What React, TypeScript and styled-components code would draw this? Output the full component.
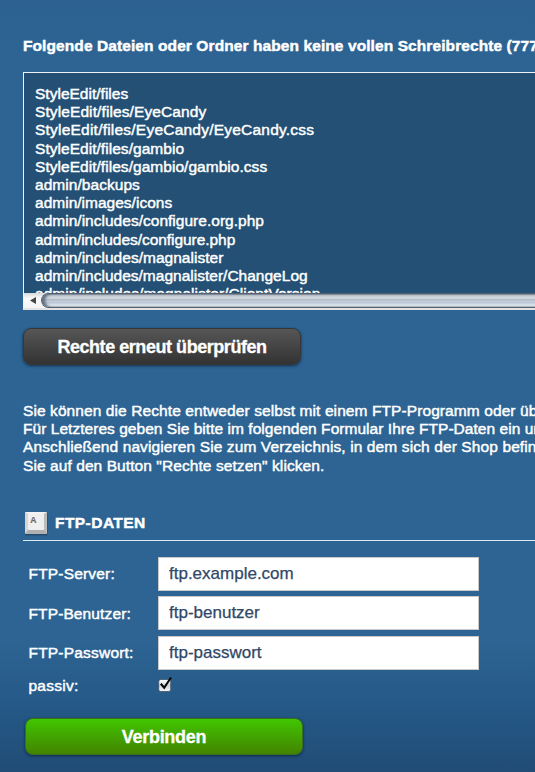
import React from "react";
import styled, { createGlobalStyle } from "styled-components";

const GlobalStyle = createGlobalStyle`
  * { box-sizing: border-box; }
  html, body { margin: 0; padding: 0; overflow: hidden; }
  body { font-family: "Liberation Sans", Arial, sans-serif; }
`;

const Page = styled.main`
  width: 100%;
  height: 772px;
  padding: 37px 0 0 23px;
  overflow: hidden;
  color: #fff;
  font-size: 15.5px;
  line-height: 18.2px;
  white-space: nowrap;
  -webkit-text-stroke: 0.45px currentColor;
  background: linear-gradient(#2c6191 0, #2d6493 60px, #2d6493 640px, #265a88 700px, #204c76 772px);
`;

const Title = styled.h1`
  margin: 0 0 17px;
  font-size: 15.5px;
  line-height: 18px;
  font-weight: 700;
  letter-spacing: 0.09px;
`;

const FilePanel = styled.section`
  width: 700px;
  height: 238px;
  margin-bottom: 18px;
  border: 1px solid #eef3f7;
  border-right: 0;
  border-bottom: 2px solid #e3e3e3;
  background: #235074;
  display: flex;
  flex-direction: column;
`;

const FileList = styled.ul`
  flex: 1;
  min-height: 0;
  margin: 0;
  padding: 12px 0 0 11px;
  list-style: none;
  overflow: hidden;
`;

const TextLine = styled.div<{ $spacing: number }>`
  letter-spacing: ${(p) => p.$spacing}px;
`;

const Scrollbar = styled.div`
  display: flex;
  height: 15px;
  flex: none;
  background: linear-gradient(#d9d9d9, #fafafa 35%, #f4f4f4);
`;

const ScrollArrow = styled.svg`
  flex: none;
  width: 17px;
  height: 15px;
`;

const ScrollThumb = styled.div`
  flex: 1;
  border: 1px solid #55616e;
  border-right: 0;
  border-radius: 8px 0 0 8px;
  box-shadow: inset 3px 0 3px #5d6d7e;
  background: linear-gradient(#6f8192 0, #c3cad2 10%, #d3d8de 25%, #ccd2da 35%, #a9b5c3 45%, #c8d0da 56%, #b6c5d6 66%, #f3faff 92%, #c6cbd0 100%);
`;

const Button = styled.button<{ $tone: "dark" | "green" }>`
  display: block;
  width: 278px;
  height: 37px;
  padding: 1px 0 0;
  border-radius: 8px;
  border: 1px solid ${(p) => (p.$tone === "dark" ? "#353637" : "#39701d")};
  background: ${(p) =>
    p.$tone === "dark"
      ? "linear-gradient(#565656, #333)"
      : "linear-gradient(#41c600, #438300)"};
  box-shadow: 0 1px 3px rgba(0, 20, 45, 0.65);
  color: #fff;
  font: 700 18px/35px "Liberation Sans", Arial, sans-serif;
  letter-spacing: ${(p) => (p.$tone === "dark" ? "-0.45px" : "-0.3px")};
  -webkit-text-stroke: 0.3px currentColor;
`;

const Intro = styled.div`
  margin: 37px 0 36px;
`;

const SectionHeading = styled.header`
  display: flex;
  align-items: center;
  gap: 7px;
  height: 30px;
  padding: 0 0 4px 1px;
  border-bottom: 1px solid #dbe9f3;
`;

const SectionTitle = styled.h2`
  margin: 0;
  font-size: 15.5px;
  line-height: 20px;
  letter-spacing: 0.45px;
`;

const Form = styled.form`
  display: grid;
  grid-template-columns: 129px 321px;
  grid-template-rows: 34px 34px 34px 20px;
  row-gap: 5.5px;
  align-items: center;
  margin: 16px 0 23px;
  padding-left: 5.5px;
`;

const Label = styled.label<{ $spacing: number }>`
  padding-top: 1px;
  letter-spacing: ${(p) => p.$spacing}px;
`;

const Field = styled.input`
  width: 321px;
  height: 34px;
  padding: 0 10.5px;
  border: 1px solid #c7c9cb;
  border-radius: 0;
  outline: 0;
  background: #fff;
  color: #304767;
  font: 17px "Liberation Sans", Arial, sans-serif;
  -webkit-text-stroke: 0.25px currentColor;
`;

const Actions = styled.div`
  padding-left: 2px;
`;

const KeyIcon = () => (
  <svg width="24" height="25" viewBox="0 0 24 25" aria-hidden="true">
    <rect x="1" y="2" width="22.5" height="22.5" rx="1" fill="#1b3f60" opacity=".65" />
    <rect x="1" y="1" width="22" height="22" rx="1" fill="#c8c8c8" />
    <path d="M1 1h22l-3 2H4z" fill="#f3f3f3" />
    <path d="M1 1l3 2v16l-3 4z" fill="#d6d6d6" />
    <path d="M23 1l-3 2v16l3 4z" fill="#bdbdbd" />
    <path d="M1 23l3-4h16l3 4z" fill="#b0b0b0" />
    <rect x="4" y="3" width="16" height="16" rx="1" fill="#efefef" />
    <text x="6.2" y="12" fontSize="8.5" fontWeight="700" fill="#6c6c6c" stroke="#6c6c6c" strokeWidth=".2">A</text>
  </svg>
);

const CheckBox = () => (
  <svg width="16" height="18" viewBox="0 0 16 18" role="checkbox" aria-checked="true" aria-label="passiv">
    <defs>
      <linearGradient id="boxFill" x1="0" y1="0" x2="0" y2="1">
        <stop offset="0" stopColor="#fff" />
        <stop offset=".5" stopColor="#cfd3d8" />
        <stop offset="1" stopColor="#f5f7f9" />
      </linearGradient>
    </defs>
    <rect x=".7" y="3.5" width="12" height="12" rx="2" fill="url(#boxFill)" stroke="#405468" strokeWidth=".8" />
    <path d="M2.8 7.8l3.4 4L13 1.5" fill="none" stroke="#080808" strokeWidth="2.1" />
  </svg>
);

const files: [string, number][] = [
  ["StyleEdit/files", 0.01],
  ["StyleEdit/files/EyeCandy", 0.1],
  ["StyleEdit/files/EyeCandy/EyeCandy.css", 0.22],
  ["StyleEdit/files/gambio", 0.04],
  ["StyleEdit/files/gambio/gambio.css", 0.04],
  ["admin/backups", 0.05],
  ["admin/images/icons", 0.01],
  ["admin/includes/configure.org.php", 0.02],
  ["admin/includes/configure.php", -0.05],
  ["admin/includes/magnalister", 0.02],
  ["admin/includes/magnalister/ChangeLog", 0.01],
  ["admin/includes/magnalister/ClientVersion", 0.05],
];

const intro: [string, number][] = [
  ["Sie können die Rechte entweder selbst mit einem FTP-Programm oder über", 0.09],
  ["Für Letzteres geben Sie bitte im folgenden Formular Ihre FTP-Daten ein und", 0.04],
  ["Anschließend navigieren Sie zum Verzeichnis, in dem sich der Shop befindet", 0.11],
  ['Sie auf den Button "Rechte setzen" klicken.', 0.08],
];

const fields: [string, string, number][] = [
  ["FTP-Server:", "ftp.example.com", 0.18],
  ["FTP-Benutzer:", "ftp-benutzer", 0.12],
  ["FTP-Passwort:", "ftp-passwort", 0.2],
];

export default function App() {
  return (
    <>
      <GlobalStyle />
      <Page>
        <Title>Folgende Dateien oder Ordner haben keine vollen Schreibrechte (777)</Title>
        <FilePanel>
          <FileList>
            {files.map(([name, spacing]) => (
              <TextLine as="li" key={name} $spacing={spacing}>{name}</TextLine>
            ))}
          </FileList>
          <Scrollbar>
            <ScrollArrow viewBox="0 0 17 15"><path d="M12 4v7L6 7.5z" fill="#444" /></ScrollArrow>
            <ScrollThumb />
          </Scrollbar>
        </FilePanel>
        <Button $tone="dark">Rechte erneut überprüfen</Button>
        <Intro>
          {intro.map(([line, spacing]) => (
            <TextLine key={line} $spacing={spacing}>{line}</TextLine>
          ))}
        </Intro>
        <SectionHeading>
          <KeyIcon />
          <SectionTitle>FTP-DATEN</SectionTitle>
        </SectionHeading>
        <Form>
          {fields.map(([label, value, spacing]) => (
            <React.Fragment key={label}>
              <Label $spacing={spacing}>{label}</Label>
              <Field defaultValue={value} aria-label={label} />
            </React.Fragment>
          ))}
          <Label $spacing={0.25}>passiv:</Label>
          <CheckBox />
        </Form>
        <Actions>
          <Button $tone="green">Verbinden</Button>
        </Actions>
      </Page>
    </>
  );
}
